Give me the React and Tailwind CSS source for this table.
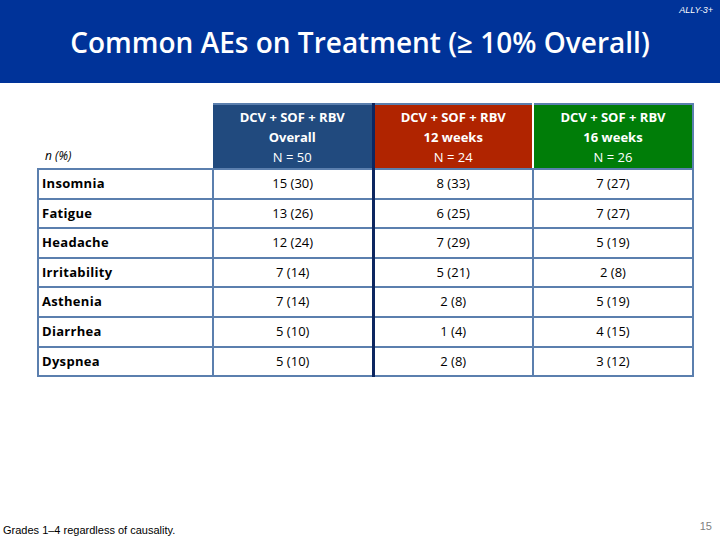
import React from "react";

const rows = [
  ["Insomnia", "15 (30)", "8 (33)", "7 (27)"],
  ["Fatigue", "13 (26)", "6 (25)", "7 (27)"],
  ["Headache", "12 (24)", "7 (29)", "5 (19)"],
  ["Irritability", "7 (14)", "5 (21)", "2 (8)"],
  ["Asthenia", "7 (14)", "2 (8)", "5 (19)"],
  ["Diarrhea", "5 (10)", "1 (4)", "4 (15)"],
  ["Dyspnea", "5 (10)", "2 (8)", "3 (12)"],
];

export default function App() {
  return (
    <div className="w-[720px] h-[540px] bg-white flex flex-col font-['Open_Sans',sans-serif] overflow-hidden">
      <div className="h-[83px] bg-[#003399] relative flex items-center justify-center">
        <span className="absolute right-[7px] top-[4px] text-[9px] italic text-white font-['Liberation_Sans',sans-serif]">ALLY-3+</span>
        <h1 className="text-white font-semibold text-[28px] tracking-[0px] mt-[1px] font-['Open_Sans',sans-serif]">
          Common AEs on Treatment (≥ 10% Overall)
        </h1>
      </div>

      <div className="pl-[37px] pt-[20px]">
        <table className="border-collapse table-fixed text-[13px] text-black">
          <colgroup>
            <col className="w-[175px]" />
            <col className="w-[160px]" />
            <col className="w-[160px]" />
            <col className="w-[160px]" />
          </colgroup>
          <thead>
            <tr className="h-[65px]">
              <th className="border-b-2 border-[#5b7fae] text-left align-bottom pl-[7px] pb-[3px] font-normal italic text-[12px]">
                n (%)
              </th>
              <th className="bg-[#214a7e] border-t-2 border-[#5b7fae] border-r-[3px] border-r-[#0c2660] border-b-2 border-b-[#5b7fae] text-white text-center leading-[20px] font-bold">
                DCV + SOF + RBV
                <br />
                Overall
                <br />
                <span className="font-normal">N = 50</span>
              </th>
              <th className="bg-[#b02400] border-t-2 border-[#5b7fae] border-r-2 border-r-white border-b-2 border-b-[#5b7fae] text-white text-center leading-[20px] font-bold">
                DCV + SOF + RBV
                <br />
                12 weeks
                <br />
                <span className="font-normal">N = 24</span>
              </th>
              <th className="bg-[#007d08] border-t-2 border-[#5b7fae] border-r-2 border-r-[#5b7fae] border-b-2 border-b-[#5b7fae] text-white text-center leading-[20px] font-bold">
                DCV + SOF + RBV
                <br />
                16 weeks
                <br />
                <span className="font-normal">N = 26</span>
              </th>
            </tr>
          </thead>
          <tbody>
            {rows.map((r) => (
              <tr key={r[0]} className="h-[29.6px]">
                <td className="border-2 border-[#5b7fae] pl-[3px] font-bold tracking-[0.3px]">{r[0]}</td>
                <td className="border-2 border-[#5b7fae] border-r-[3px] border-r-[#0c2660] text-center">{r[1]}</td>
                <td className="border-2 border-[#5b7fae] text-center">{r[2]}</td>
                <td className="border-2 border-[#5b7fae] text-center">{r[3]}</td>
              </tr>
            ))}
          </tbody>
        </table>
      </div>

      <div className="flex-1" />
      <div className="flex justify-between items-end px-[3px] pb-[2px]">
        <span className="text-[11px] text-black font-['Liberation_Sans',sans-serif]">
          Grades 1–4 regardless of causality.
        </span>
        <span className="text-[11px] text-[#7f7f7f] pr-[5px] pb-[4px] font-['Liberation_Sans',sans-serif]">15</span>
      </div>
    </div>
  );
}
